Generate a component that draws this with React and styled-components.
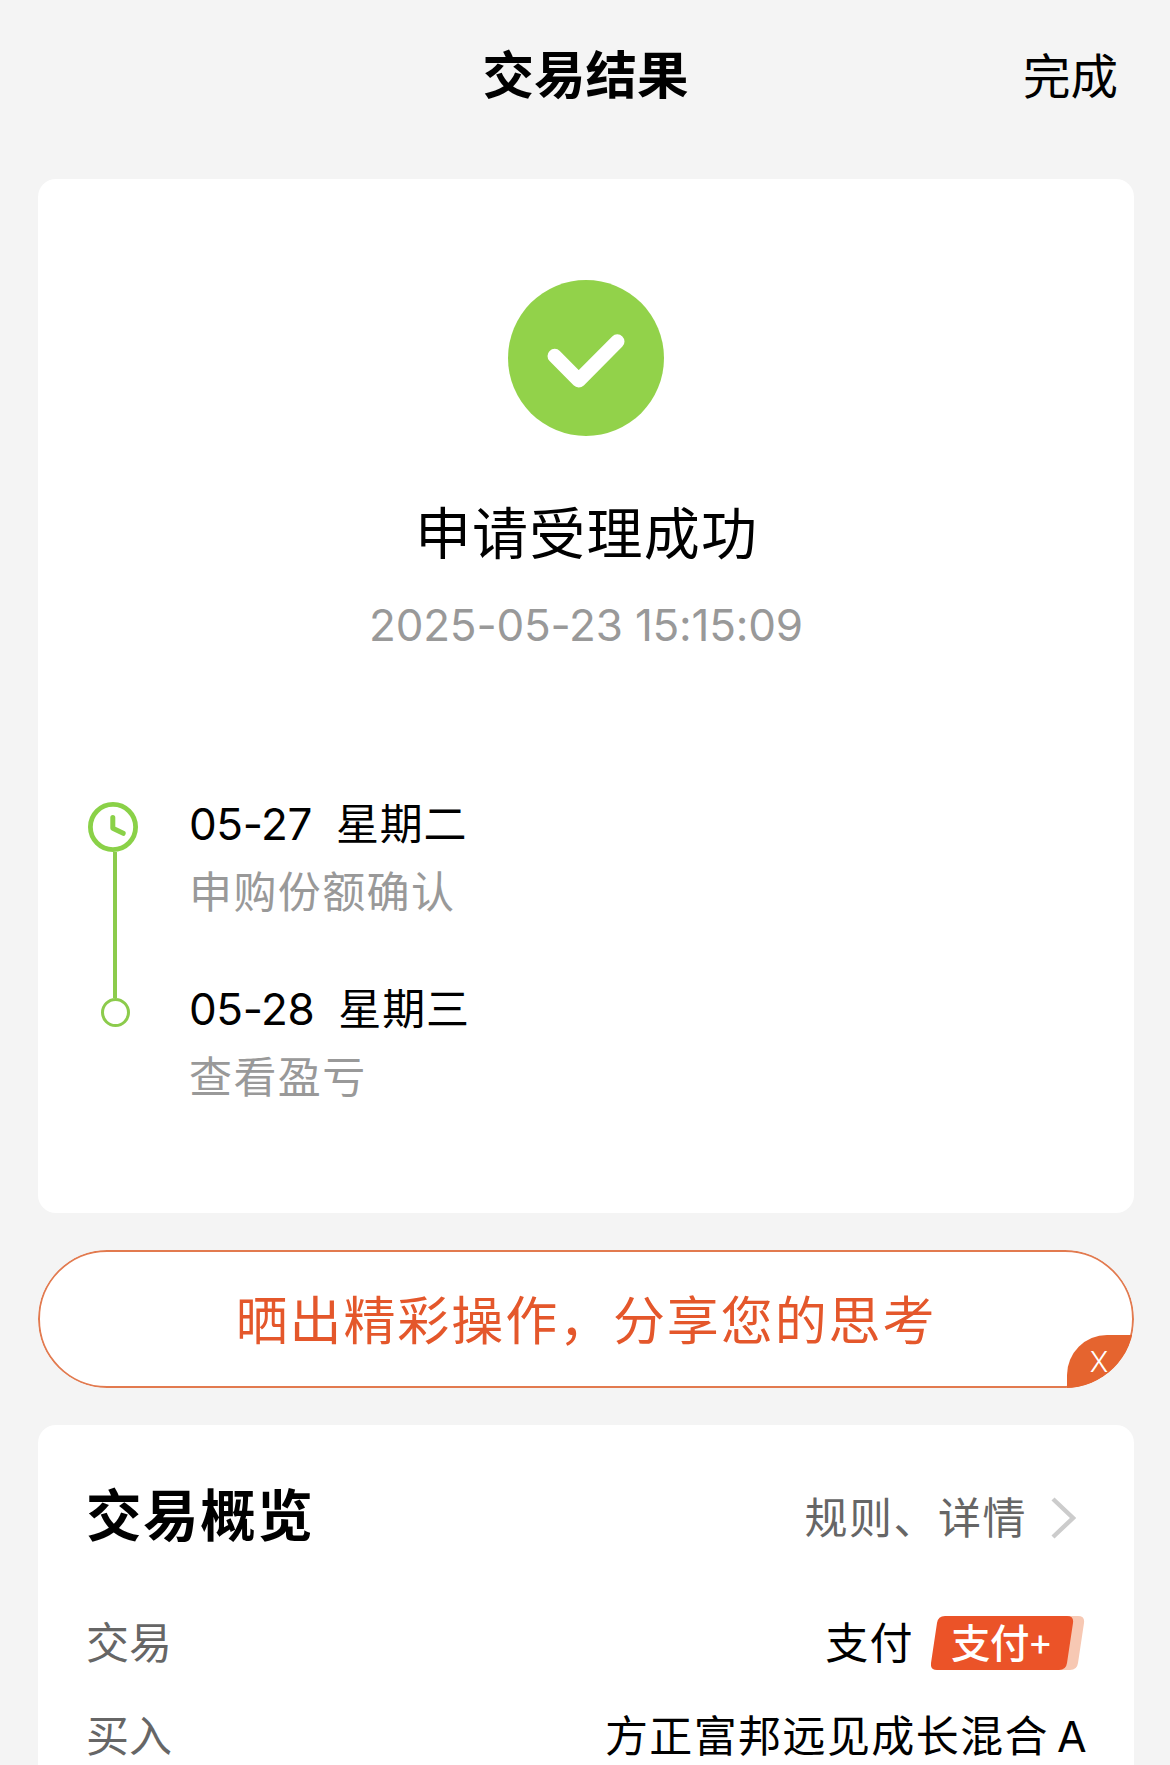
import React from 'react';
import styled, { createGlobalStyle } from 'styled-components';

const colors = {
  page: '#f4f4f4',
  card: '#ffffff',
  text: '#000000',
  textGray: '#666666',
  textLight: '#999999',
  green: '#92d24a',
  greenClock: '#8ad148',
  greenLine: '#8ccb4c',
  orange: '#e4572b',
  orangeFill: '#e5642f',
  tag: '#eb5328',
  tagShadow: '#f7c8b3',
};

const GlobalStyle = createGlobalStyle`
  * {
    box-sizing: border-box;
  }

  body {
    margin: 0;
    background: ${colors.page};
    color: ${colors.text};
    font-family: Inter, 'Noto Sans CJK SC', sans-serif;
  }

  h1, h2, h3, p {
    margin: 0;
  }
`;

const Page = styled.div`
  width: 1170px;
  height: 1765px;
  padding: 0 36px 0 38px;
  display: flex;
  flex-direction: column;
  overflow: hidden;
`;

const Header = styled.header`
  height: 179px;
  flex: none;
  display: grid;
  grid-template-columns: 1fr auto 1fr;
  align-items: start;
  padding: 45px 16px 0 15px;
`;

const HeaderTitle = styled.h1`
  grid-column: 2;
  font-size: 51.5px;
  line-height: 60px;
  font-weight: 600;
`;

const DoneButton = styled.button`
  justify-self: end;
  margin-top: 2px;
  padding: 0;
  border: 0;
  background: none;
  color: inherit;
  font-family: inherit;
  font-size: 47.5px;
  line-height: 60px;
`;

const Card = styled.section`
  flex: none;
  background: ${colors.card};
  border-radius: 18px;
`;

const ResultCard = styled(Card)`
  height: 1034px;
  padding-top: 101px;
  display: flex;
  flex-direction: column;
  align-items: center;
`;

const ResultTitle = styled.h2`
  margin-top: 64px;
  font-size: 56px;
  line-height: 68px;
  font-weight: 400;
  letter-spacing: 1.2px;
  padding-left: 1px;
`;

const ResultTime = styled.p`
  margin-top: 33px;
  font-size: 44px;
  line-height: 48px;
  letter-spacing: -0.2px;
  color: ${colors.textLight};
`;

const Timeline = styled.div`
  align-self: stretch;
  display: flex;
  margin-top: 153px;
  padding-left: 50px;
`;

const TimelineRail = styled.div`
  width: 52px;
  display: flex;
  flex-direction: column;
`;

const RailLine = styled.div`
  width: 4px;
  height: 146px;
  margin-left: 25px;
  background: ${colors.greenLine};
`;

const RailDot = styled.div`
  width: 29px;
  height: 29px;
  margin-left: 13px;
  border: 3px solid ${colors.greenLine};
  border-radius: 50%;
`;

const TimelineSteps = styled.div`
  display: flex;
  flex-direction: column;
  gap: 59px;
  padding-left: 49px;
  margin-top: -6px;
`;

const StepDate = styled.p`
  display: flex;
  gap: 24px;
  font-size: 44px;
  line-height: 56px;
  letter-spacing: -0.4px;
`;

const Weekday = styled.span`
  font-size: 43px;
  letter-spacing: 0.8px;
`;

const StepText = styled.p`
  margin-top: 10px;
  font-size: 43px;
  line-height: 60px;
  letter-spacing: 1.4px;
  color: ${colors.textLight};
`;

const ShareBanner = styled.div`
  position: relative;
  flex: none;
  height: 138px;
  margin: 37px 0;
  padding-bottom: 4px;
  display: flex;
  align-items: center;
  justify-content: center;
  border: 2px solid #e27a4f;
  border-radius: 69px;
  background: ${colors.card};
  color: ${colors.orange};
  font-size: 52px;
  letter-spacing: 1.9px;
  clip-path: inset(0 round 69px);
`;

const CloseCorner = styled.button`
  position: absolute;
  right: -2px;
  bottom: -2px;
  width: 67px;
  height: 53px;
  padding: 0 3px 0 0;
  border: 0;
  border-top-left-radius: 40px;
  background: ${colors.orangeFill};
  color: #fff;
  font-family: Inter, sans-serif;
  font-size: 28px;
  font-weight: 300;
  line-height: 50px;
`;

const OverviewCard = styled(Card)`
  height: 400px;
  padding: 60px 46px 0 48px;
`;

const OverviewHead = styled.div`
  display: flex;
  justify-content: space-between;
  align-items: center;
  height: 62px;
`;

const OverviewTitle = styled.h2`
  font-size: 55.5px;
  line-height: 62px;
  font-weight: 600;
  letter-spacing: 1.6px;
`;

const RulesLink = styled.div`
  display: flex;
  align-items: center;
  padding-right: 12px;
  padding-top: 4px;
  gap: 24px;
  color: ${colors.textGray};
  font-size: 43px;
  line-height: 60px;
  letter-spacing: 1.5px;
`;

const Row = styled.div`
  display: flex;
  justify-content: space-between;
  align-items: center;
  height: 60px;
  margin-top: ${(props) => props.$gap}px;
  font-size: 43px;
  line-height: 60px;
  letter-spacing: 1.4px;
`;

const RowLabel = styled.span`
  color: ${colors.textGray};
  letter-spacing: 0;
`;

const RowValue = styled.span`
  display: flex;
  align-items: center;
  gap: ${(props) => props.$gap || 0}px;
`;

const PayTag = styled.span`
  position: relative;
  width: 154px;
  height: 54px;
  margin-right: 3px;
  padding-left: 20px;
  color: #fff;
  font-size: 39.5px;
  line-height: 56px;
  font-weight: 500;
  letter-spacing: -0.6px;
`;

const TagShape = styled.svg`
  position: absolute;
  left: 0;
  top: 0;
`;

const TagText = styled.span`
  position: relative;
  display: flex;
`;

const Plus = styled.span`
  font-size: 38px;
  line-height: 50px;
  font-weight: 400;
  margin-left: -1px;
`;

const SuccessIcon = () => (
  <svg width="156" height="156" viewBox="0 0 156 156" fill="none">
    <circle cx="78" cy="78" r="78" fill={colors.green} />
    <path
      d="M46.7 76L70.7 100.3L109.3 61.5"
      stroke="#fff"
      strokeWidth="14.4"
      strokeLinecap="round"
      strokeLinejoin="round"
    />
  </svg>
);

const ClockIcon = () => (
  <svg width="50" height="50" viewBox="0 0 50 50" fill="none" stroke={colors.greenClock}>
    <circle cx="25" cy="25" r="22.6" strokeWidth="4.8" />
    <path d="M24.8 15.5V26.3L35.2 31.3" strokeWidth="5" strokeLinecap="round" strokeLinejoin="round" />
  </svg>
);

const ChevronIcon = () => (
  <svg width="25" height="42" viewBox="0 0 25 42" fill="none">
    <path d="M2 2L22 21L2 40" stroke="#cccccc" strokeWidth="4.4" />
  </svg>
);

const steps = [
  { date: '05-27', weekday: '星期二', text: '申购份额确认' },
  { date: '05-28', weekday: '星期三', text: '查看盈亏' },
];

const App = () => {
  return (
    <>
      <GlobalStyle />
      <Page>
        <Header>
          <HeaderTitle>交易结果</HeaderTitle>
          <DoneButton>完成</DoneButton>
        </Header>

        <ResultCard>
          <SuccessIcon />
          <ResultTitle>申请受理成功</ResultTitle>
          <ResultTime>2025-05-23 15:15:09</ResultTime>

          <Timeline>
            <TimelineRail>
              <ClockIcon />
              <RailLine />
              <RailDot />
            </TimelineRail>
            <TimelineSteps>
              {steps.map((step) => (
                <div key={step.date}>
                  <StepDate>
                    <span>{step.date}</span>
                    <Weekday>{step.weekday}</Weekday>
                  </StepDate>
                  <StepText>{step.text}</StepText>
                </div>
              ))}
            </TimelineSteps>
          </Timeline>
        </ResultCard>

        <ShareBanner>
          晒出精彩操作，分享您的思考
          <CloseCorner>X</CloseCorner>
        </ShareBanner>

        <OverviewCard>
          <OverviewHead>
            <OverviewTitle>交易概览</OverviewTitle>
            <RulesLink>
              规则、详情
              <ChevronIcon />
            </RulesLink>
          </OverviewHead>

          <Row $gap={66}>
            <RowLabel>交易</RowLabel>
            <RowValue $gap={17}>
              支付
              <PayTag>
                <TagShape width="154" height="54" viewBox="0 0 154 54">
                  <path
                    d="M20 0H147Q154 0 153 7L147 47Q146 54 139 54H20Z"
                    fill={colors.tagShadow}
                  />
                  <path
                    d="M14 0H136Q143 0 142 7L136 47Q135 54 128 54H6Q-1 54 0 47L6 7Q7 0 14 0Z"
                    fill={colors.tag}
                  />
                </TagShape>
                <TagText>
                  支付<Plus>+</Plus>
                </TagText>
              </PayTag>
            </RowValue>
          </Row>

          <Row $gap={33}>
            <RowLabel>买入</RowLabel>
            <RowValue $gap={8}>
              方正富邦远见成长混合
              <span>A</span>
            </RowValue>
          </Row>
        </OverviewCard>
      </Page>
    </>
  );
};

export default App;
